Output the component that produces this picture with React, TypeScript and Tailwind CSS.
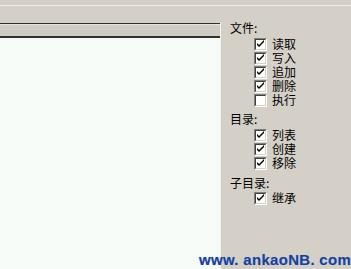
import React from "react";

function Check({ checked }: { checked: boolean }) {
  return (
    <div className="w-[13px] h-[13px] shrink-0 border border-t-[#808080] border-l-[#808080] border-b-white border-r-white">
      <div className="w-full h-full border border-t-[#404040] border-l-[#404040] border-b-[#d4d0c8] border-r-[#d4d0c8] bg-white">
        {checked && (
          <svg width="9" height="9" viewBox="0 0 9 9" className="block">
            <path d="M1 3 L1 5 L3 7 L8 2 L8 0 L3 5 Z" fill="#000" />
          </svg>
        )}
      </div>
    </div>
  );
}

function Item({ label, checked, mt = "" }: { label: string; checked: boolean; mt?: string }) {
  return (
    <div className={`h-[14px] flex items-center pl-[24px] ${mt}`}>
      <Check checked={checked} />
      <span className="ml-[5px] leading-[12px] h-[12px]">{label}</span>
    </div>
  );
}

function Header({ label, mt }: { label: string; mt: string }) {
  return (
    <div className={`h-[14px] flex items-center ${mt}`}>
      <span className="leading-[12px] h-[12px]">{label}</span>
    </div>
  );
}

export default function App() {
  return (
    <div
      className="relative w-[351px] h-[269px] overflow-hidden bg-[#d4d0c8] flex flex-col text-[12px] text-black"
      style={{ fontFamily: '"Noto Sans CJK SC", "Liberation Sans", sans-serif' }}
    >
      <div className="h-[5px] shrink-0" />
      <div className="h-px shrink-0 bg-[#ecebe6]" />
      <div className="flex flex-1 min-h-0">
        <div className="w-[222px] shrink-0 flex flex-col">
          <div className="h-[17px] shrink-0" />
          <div className="w-[221px] flex flex-col flex-1 border-r border-r-[#f4f4f0]">
            <div className="h-px bg-[#303030]" />
            <div className="h-px bg-[#e6e4de]" />
            <div className="h-[11px] bg-[#cfccc4]" />
            <div className="h-[2px] bg-[#303030]" />
            <div className="flex-1 bg-[#f7fbf8]" />
          </div>
        </div>
        <div className="flex-1 flex flex-col pl-[8px]">
          <Header label="文件:" mt="mt-[15px]" />
          <Item label="读取" checked mt="mt-[2px]" />
          <Item label="写入" checked />
          <Item label="追加" checked />
          <Item label="删除" checked />
          <Item label="执行" checked={false} />
          <Header label="目录:" mt="mt-[5px]" />
          <Item label="列表" checked mt="mt-[2px]" />
          <Item label="创建" checked />
          <Item label="移除" checked />
          <Header label="子目录:" mt="mt-[6px]" />
          <Item label="继承" checked mt="mt-[1px]" />
        </div>
      </div>
      <div
        className="absolute left-[199px] top-[251px] text-[15px] font-bold text-[#1d3f93] whitespace-nowrap leading-[18px] tracking-[0.3px]"
        style={{ fontFamily: '"Liberation Sans", Arial, sans-serif', textShadow: "0 0 1px #8fb0e8" }}
      >
        www. ankaoNB. com
      </div>
    </div>
  );
}
